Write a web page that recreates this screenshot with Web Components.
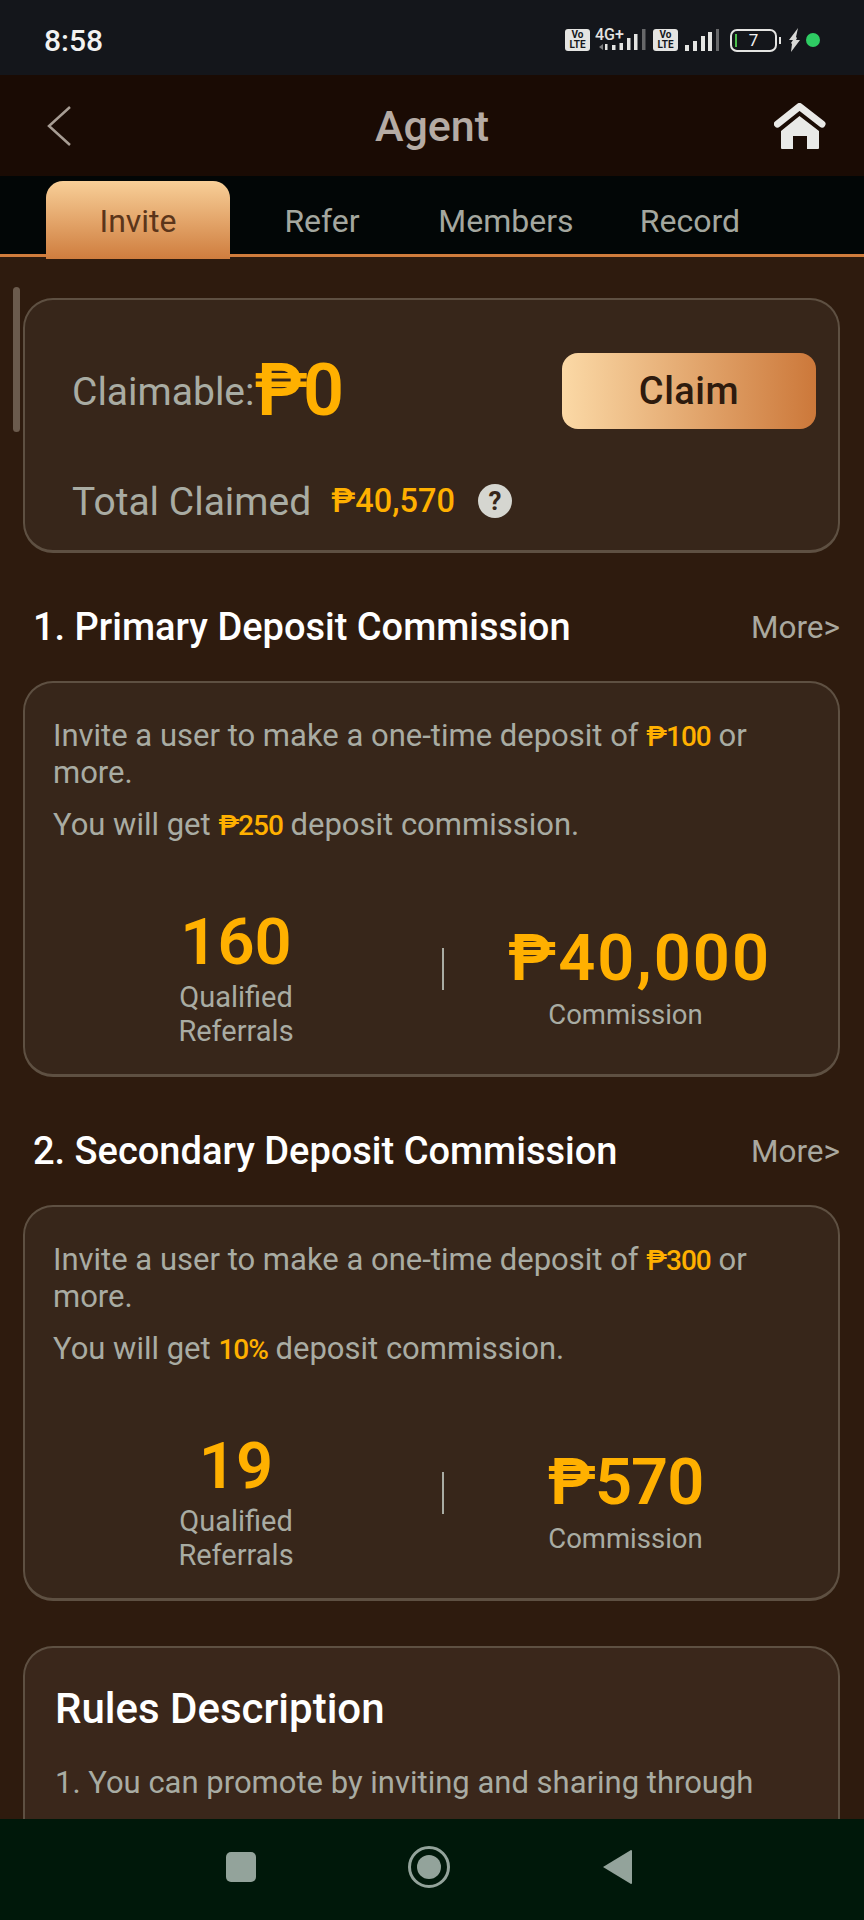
<!DOCTYPE html>
<html>
<head>
<meta charset="utf-8">
<title>Agent</title>
<style>
  html, body { margin: 0; padding: 0; background: #2e1b0e; }
  body { font-family: Roboto, "Liberation Sans", sans-serif; }
</style>
</head>
<body>
<agent-page>
  <status-bar slot="top"></status-bar>
  <app-header slot="top" title="Agent"></app-header>
  <tab-bar slot="top" items="Invite,Refer,Members,Record" active="0"></tab-bar>

  <claim-card></claim-card>

  <section-head>1. Primary Deposit Commission</section-head>
  <commission-card count="160" amount="₱40,000" style="--amt-gap: 2px; --amt-shift: 28px">
    <p>Invite a user to make a one-time deposit of <gold-amt>₱100</gold-amt> or<br>more.</p>
    <p>You will get <gold-amt>₱250</gold-amt> deposit commission.</p>
  </commission-card>

  <section-head>2. Secondary Deposit Commission</section-head>
  <commission-card count="19" amount="₱570" style="--amt-gap: -1px">
    <p>Invite a user to make a one-time deposit of <gold-amt>₱300</gold-amt> or<br>more.</p>
    <p>You will get <gold-amt>10%</gold-amt> deposit commission.</p>
  </commission-card>

  <rules-card></rules-card>

  <nav-bar slot="bottom"></nav-bar>
</agent-page>

<script>
// Page frame: fixed top bars, clipped scroll area, nav bar at the bottom
class AgentPage extends HTMLElement {
  constructor() {
    super();
    this.attachShadow({mode: 'open'});
    this.shadowRoot.innerHTML = `
      <style>
        :host { display: flex; flex-direction: column; width: 864px; height: 1920px; overflow: hidden; background: #2e1b0e; }
        .scroll { flex: 1; min-height: 0; overflow: hidden; position: relative; padding: 39px 24px 0 23px; }
        .thumb { position: absolute; left: 13px; top: 28px; width: 7px; height: 145px; border-radius: 4px; background: #6b5b4d; }
      </style>
      <slot name="top"></slot>
      <div class="scroll"><div class="thumb"></div><slot></slot></div>
      <slot name="bottom"></slot>`;
  }
}

class StatusBar extends HTMLElement {
  constructor() {
    super();
    this.attachShadow({mode: 'open'});
    this.shadowRoot.innerHTML = `
      <style>
        :host { display: flex; align-items: center; justify-content: space-between; height: 75px; padding: 5px 44px 0; box-sizing: border-box; background: #14161b; color: #f2f2f2; }
        .time { font-size: 30px; font-weight: 500; }
        .icons { display: flex; align-items: center; }
        .volte { width: 25px; height: 22px; border-radius: 3px; background: #e4e4e2; color: #14161b; font-size: 10px; font-weight: 700; line-height: 10px; text-align: center; display: flex; flex-direction: column; justify-content: center; }
        svg { display: block; }
        .batt { position: relative; width: 47px; height: 23px; box-sizing: border-box; border: 2px solid #e4e4e2; border-radius: 7px; margin-left: 11px; text-align: center; font-size: 17px; line-height: 19px; }
        .batt i { position: absolute; left: 3px; top: 3px; width: 2px; height: 13px; background: #4cc04c; }
        .tip { width: 2px; height: 7px; background: #e4e4e2; margin-left: 2px; }
        .dot { width: 14px; height: 14px; border-radius: 50%; background: #2ecc63; margin-left: 5px; }
      </style>
      <div class="time">8:58</div>
      <div class="icons">
        <div class="volte"><div>Vo</div><div>LTE</div></div>
        <svg style="margin-left:5px" width="54" height="32" viewBox="0 -4 54 32" fill="#e4e4e2">
          <text x="0" y="12" font-family="Roboto, sans-serif" font-size="16" font-weight="500">4G+</text>
          <path d="M8 16v6l-4-3z" opacity=".5"/><rect x="10" y="16" width="2.5" height="6"/>
          <rect x="17" y="17" width="3.5" height="5"/><rect x="24.5" y="15" width="3.5" height="7"/><rect x="32" y="10" width="3.5" height="12"/><rect x="39" y="6" width="3.5" height="16"/><rect x="47" y="1" width="3.5" height="21" opacity=".4"/>
        </svg>
        <div class="volte" style="margin-left:4px"><div>Vo</div><div>LTE</div></div>
        <svg style="margin-left:7px" width="34" height="22" viewBox="0 0 34 22" fill="#e4e4e2">
          <rect x="0" y="16" width="4" height="6"/><rect x="8" y="12" width="4" height="10"/><rect x="16" y="7" width="4" height="15"/><rect x="23" y="3" width="4" height="19"/><rect x="31" y="0" width="3" height="22" opacity=".4"/>
        </svg>
        <div class="batt"><i></i>7</div>
        <div class="tip"></div>
        <svg style="margin-left:7px" width="13" height="24" viewBox="0 0 13 24" fill="#d8d8d6"><path d="M10 0 1 12h4l-2 3 1 1-1 8 9-12H8l1-2-1-1z"/></svg>
        <div class="dot"></div>
      </div>`;
  }
}

class AppHeader extends HTMLElement {
  constructor() {
    super();
    this.attachShadow({mode: 'open'});
    this.shadowRoot.innerHTML = `
      <style>
        :host { display: grid; grid-template-columns: 1fr auto 1fr; align-items: center; height: 101px; padding: 0 38px; box-sizing: border-box; background: #1a0b04; }
        h1 { margin: 0; font-size: 43px; font-weight: 500; color: #b5aba4; }
        svg { display: block; }
        .back { margin-left: 9px; }
        .home { justify-self: end; }
      </style>
      <svg class="back" width="24" height="40" viewBox="0 0 24 40" fill="none" stroke="#a79d94" stroke-width="2.5"><path d="M23 1 2 20l21 19"/></svg>
      <h1>${this.getAttribute('title')}</h1>
      <svg class="home" width="52" height="46" viewBox="0 0 52 46" fill="#e9e9e7">
        <path d="M3.5 21 25.5 3.5 48 21" fill="none" stroke="#e9e9e7" stroke-width="7" stroke-linecap="round" stroke-linejoin="round"/>
        <path d="M25.5 13 45 28V45a1 1 0 0 1-1 1H33V33H19V46H8a1 1 0 0 1-1-1V28Z"/>
      </svg>`;
  }
}

class TabBar extends HTMLElement {
  constructor() {
    super();
    this.attachShadow({mode: 'open'});
    let active = Number(this.getAttribute('active'));
    let tabs = this.getAttribute('items').split(',').map((t, i) =>
      `<div class="tab ${i == active ? 'on' : ''}">${t}</div>`).join('');
    this.shadowRoot.innerHTML = `
      <style>
        :host { display: block; height: 83px; box-sizing: border-box; padding: 5px 0 0 46px; background: linear-gradient(#020606 78px, #d07c3c 78px, #d07c3c 81px, #2e1b0e 81px); }
        .row { display: flex; height: 78px; }
        .tab { width: 184px; height: 78px; line-height: 80px; text-align: center; font-size: 32px; font-weight: 400; color: #a4a79f; }
        .on { color: #5b351a; border-radius: 17px 17px 0 0; background: linear-gradient(#f8cf98, #cf7d3e); }
      </style>
      <div class="row">${tabs}</div>`;
  }
}

// Inline amount in the page's yellow, used inside running text
class GoldAmt extends HTMLElement {
  constructor() {
    super();
    this.attachShadow({mode: 'open'});
    this.shadowRoot.innerHTML = `
      <style>:host { display: inline; color: #ffb000; font-size: 28px; font-weight: 500; letter-spacing: -1px; line-height: 0; }</style><slot></slot>`;
  }
}

const cardStyle = `
  background: #37261a; border: 2px solid #5e5042; border-bottom-width: 3px; border-radius: 30px; box-sizing: border-box;`;

class ClaimCard extends HTMLElement {
  constructor() {
    super();
    this.attachShadow({mode: 'open'});
    this.shadowRoot.innerHTML = `
      <style>
        :host { display: block; ${cardStyle} padding: 53px 22px 28px 47px; color: #a9aca3; }
        .row { display: flex; align-items: center; }
        .label { font-size: 39px; position: relative; top: 1px; }
        .now { color: #ffb000; font-size: 72px; font-weight: 600; line-height: 76px; letter-spacing: -5px; margin-left: 0; flex: 1; }
        button { width: 254px; height: 76px; border: 0; border-radius: 16px; background: linear-gradient(90deg, #fbd9a6, #cc783a); color: #2e1b0e; font: 500 38px Roboto, sans-serif; letter-spacing: .5px; }
        .total { margin-top: 51px; height: 42px; }
        .sum { color: #ffb000; font-size: 32.5px; font-weight: 500; margin-left: 20px; }
        svg { display: block; margin-left: 23px; }
      </style>
      <div class="row"><span class="label">Claimable:</span><span class="now">₱0</span><button>Claim</button></div>
      <div class="row total">
        <span class="label">Total Claimed</span><span class="sum">₱40,570</span>
        <svg width="34" height="34" viewBox="0 0 34 34"><circle cx="17" cy="17" r="17" fill="#d5d6d0"/><text x="17" y="26" text-anchor="middle" font-family="Roboto, sans-serif" font-size="26" font-weight="700" fill="#37261a">?</text></svg>
      </div>`;
  }
}

class SectionHead extends HTMLElement {
  constructor() {
    super();
    this.attachShadow({mode: 'open'});
    this.shadowRoot.innerHTML = `
      <style>
        :host { display: flex; justify-content: space-between; align-items: center; height: 128px; box-sizing: border-box; padding: 53px 0 33px 10px; color: #fff; }
        .t { font-size: 38px; font-weight: 500; line-height: 40px; }
        .m { font-size: 31.5px; color: #aaa99f; }
      </style>
      <div class="t"><slot></slot></div><div class="m">More&gt;</div>`;
  }
}

class CommissionCard extends HTMLElement {
  constructor() {
    super();
    this.attachShadow({mode: 'open'});
    let count = this.getAttribute('count');
    let amount = this.getAttribute('amount');
    this.shadowRoot.innerHTML = `
      <style>
        :host { display: block; ${cardStyle} padding: 34px 27px 26px 28px; color: #a9aca3; font-size: 31px; line-height: 37px; }
        ::slotted(p) { margin: 0 0 15px; }
        .stats { display: flex; align-items: center; margin-top: 67px; text-align: center; }
        .col { width: 366px; }
        .col.r { flex: 1; padding-right: 4px; }
        .num { color: #ffb000; font-size: 65px; font-weight: 600; line-height: 64px; }
        .r .num { letter-spacing: var(--amt-gap, 0); padding-left: var(--amt-shift, 0); white-space: nowrap; }
        .cap { font-size: 27.5px; line-height: 34px; }
        .col:first-child .cap { margin-top: 6px; font-size: 29px; }
        .col.r .cap { margin-top: 8px; }
        .div { width: 2px; height: 42px; margin: 0 0 20px 23px; background: #a9aca3; flex: none; }
      </style>
      <slot></slot>
      <div class="stats">
        <div class="col"><div class="num">${count}</div><div class="cap">Qualified<br>Referrals</div></div>
        <div class="div"></div>
        <div class="col r"><div class="num">${amount}</div><div class="cap">Commission</div></div>
      </div>`;
  }
}

class RulesCard extends HTMLElement {
  constructor() {
    super();
    this.attachShadow({mode: 'open'});
    this.shadowRoot.innerHTML = `
      <style>
        :host { display: block; ${cardStyle} margin-top: 45px; padding: 36px 30px 40px; height: 400px; color: #a9aca3; background: #3a271b; }
        h2 { margin: 0 0 30px; font-size: 42px; font-weight: 500; line-height: 50px; color: #fff; }
        p { margin: 0; font-size: 31px; line-height: 37px; }
      </style>
      <h2>Rules Description</h2>
      <p>1. You can promote by inviting and sharing through</p>`;
  }
}

class NavBar extends HTMLElement {
  constructor() {
    super();
    this.attachShadow({mode: 'open'});
    this.shadowRoot.innerHTML = `
      <style>
        :host { display: block; flex: none; height: 101px; background: #00180a; position: relative; z-index: 1; }
        .row { display: flex; align-items: center; height: 96px; padding-left: 226px; }
        svg { display: block; }
      </style>
      <div class="row">
        <svg width="30" height="30" viewBox="0 0 30 30"><rect width="30" height="30" rx="5" fill="#93a39b"/></svg>
        <svg style="margin-left:152px" width="42" height="42" viewBox="0 0 42 42" fill="none"><circle cx="21" cy="21" r="19.5" stroke="#93a39b" stroke-width="3"/><circle cx="21" cy="21" r="12" fill="#93a39b"/></svg>
        <svg style="margin-left:153px" width="29" height="34" viewBox="0 0 29 34"><path d="M28 0a1 1 0 0 1 1 1v32a1 1 0 0 1-1 1L0 17Z" fill="#93a39b"/></svg>
      </div>`;
  }
}

customElements.define('agent-page', AgentPage);
customElements.define('status-bar', StatusBar);
customElements.define('app-header', AppHeader);
customElements.define('tab-bar', TabBar);
customElements.define('gold-amt', GoldAmt);
customElements.define('claim-card', ClaimCard);
customElements.define('section-head', SectionHead);
customElements.define('commission-card', CommissionCard);
customElements.define('rules-card', RulesCard);
customElements.define('nav-bar', NavBar);
</script>
</body>
</html>
